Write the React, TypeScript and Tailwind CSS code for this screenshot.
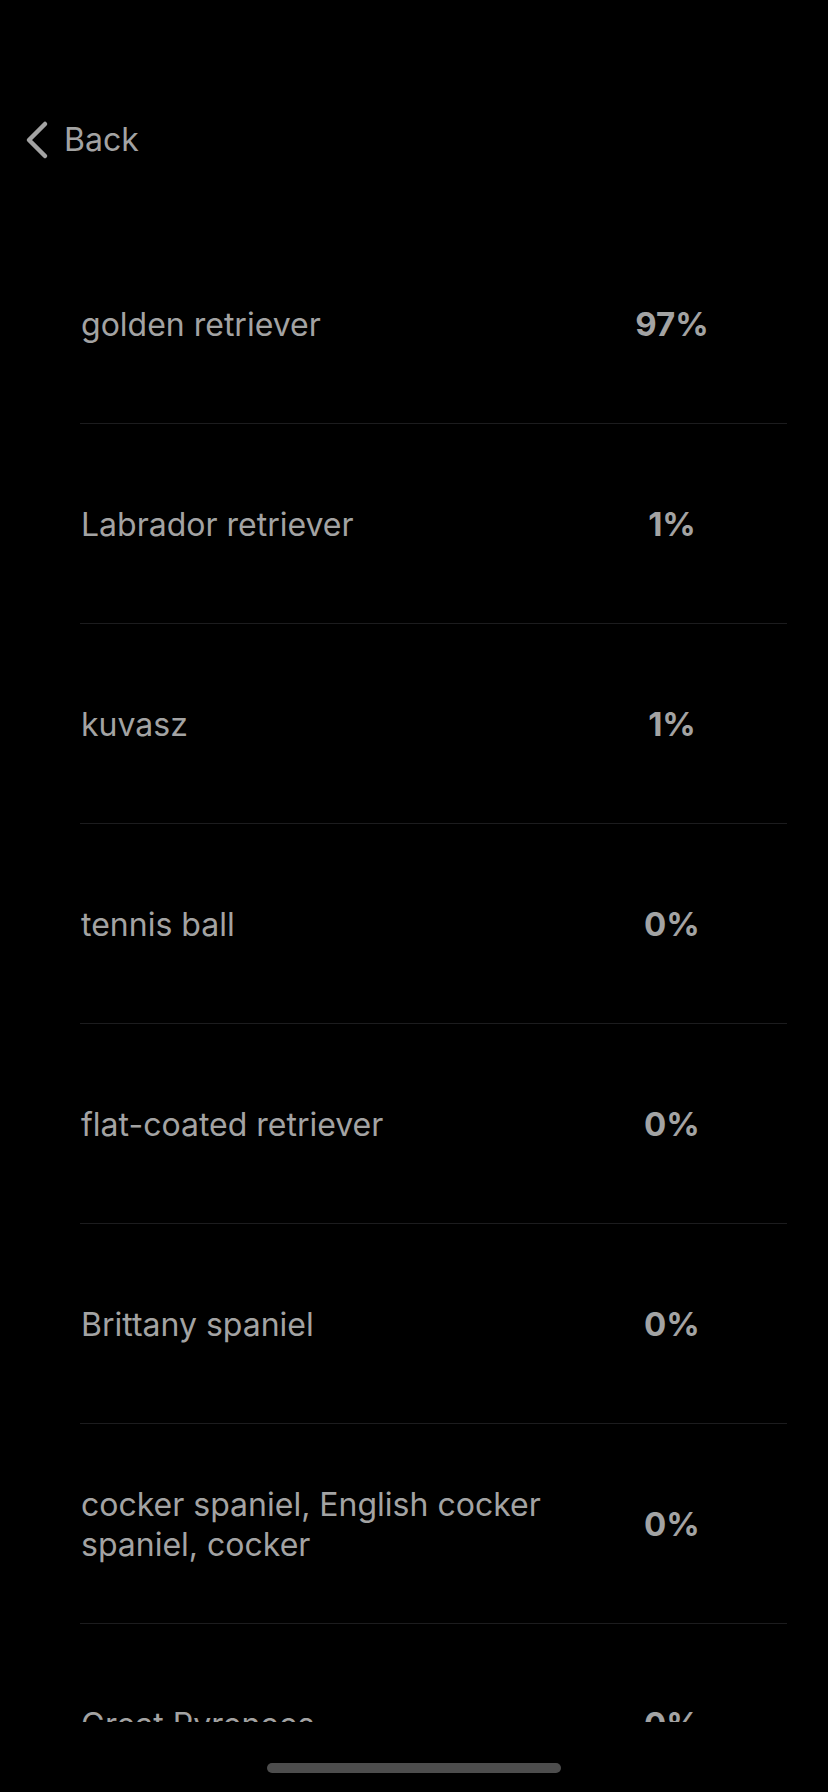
import React from 'react';

const results = [
  { label: 'golden retriever', pct: '97%' },
  { label: 'Labrador retriever', pct: '1%' },
  { label: 'kuvasz', pct: '1%' },
  { label: 'tennis ball', pct: '0%' },
  { label: 'flat-coated retriever', pct: '0%' },
  { label: 'Brittany spaniel', pct: '0%' },
  { label: 'cocker spaniel, English cocker spaniel, cocker', pct: '0%' },
  { label: 'Great Pyrenees', pct: '0%' },
];

const App = () => {
  return (
    <div
      className="relative w-[828px] h-[1792px] bg-black overflow-hidden text-[#a3a3a3]"
      style={{ fontFamily: 'Inter, "Liberation Sans", sans-serif' }}
    >
      {/* Nav bar */}
      <div className="h-[224px] pt-[120px] pl-[24px]">
        <div className="flex items-center h-[40px]">
          <svg width="26" height="40" viewBox="0 0 26 40" className="mr-[14px]">
            <polyline
              points="21,4 5,20 21,36"
              fill="none"
              stroke="#a3a3a3"
              strokeWidth="4.5"
              strokeLinecap="round"
              strokeLinejoin="round"
            />
          </svg>
          <span className="text-[32px] leading-none">Back</span>
        </div>
      </div>

      {/* Results list */}
      <div className="h-[1498px] overflow-hidden">
        {results.map((r, i) => (
          <div
            key={i}
            className="ml-[80px] mr-[41px] h-[200px] pt-[3px] flex items-center border-b border-[#1c1c1e]"
          >
            <div className="flex-1 text-[32px] leading-[40px] pl-[1px] pr-[40px]">{r.label}</div>
            <div className="w-[160px] mr-[35px] text-center text-[33px] font-bold">{r.pct}</div>
          </div>
        ))}
      </div>

      {/* Home indicator */}
      <div className="absolute left-[267px] top-[1763px] w-[294px] h-[10px] rounded-full bg-[#4d4d4d]" />
    </div>
  );
};

export default App;
